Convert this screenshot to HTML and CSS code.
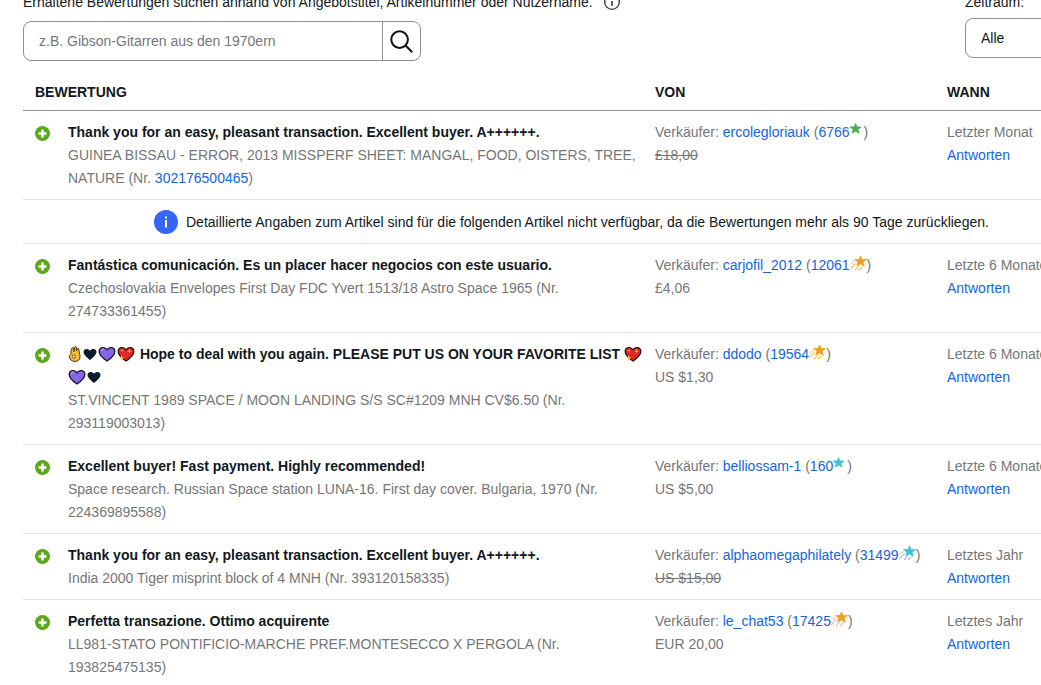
FILE: index.html
```html
<!DOCTYPE html>
<html lang="de">
<head>
<meta charset="utf-8">
<title>Bewertungen</title>
<link rel="stylesheet" href="styles.css">
</head>
<body>
<svg class="defs" aria-hidden="true">
  <symbol id="plus" viewBox="0 0 16 16"><circle cx="8" cy="8" r="8" fill="#5ba71b"/><path d="M8 3.800v8.400M3.800 8h8.400" stroke="#fff" stroke-width="2.600"/></symbol>
  <symbol id="star" viewBox="0 0 15 16"><path d="M6 1l1.500 3.700H12L8.600 7.500l1.200 4L6 9.300l-3.800 2.200 1.200-4L0 4.700h4.500z" fill="currentColor" stroke="currentColor" stroke-width=".7"/></symbol>
  <symbol id="shooting" viewBox="0 0 17 16"><path d="M10.500.8L12 4.500h4.400l-3.300 2.800 1.200 4-3.800-2.200-3.800 2.200 1.200-4-3.300-2.800H9z" fill="currentColor" stroke="currentColor" stroke-width=".7"/><path d="M5.500 8.500L.5 13.500M8.500 11.500l-3.500 3.500M12.500 11.500L9 15M4.500 6L1.500 9" stroke="currentColor" stroke-width=".8" fill="none"/></symbol>
  <symbol id="black-heart" viewBox="0 0 14 16"><path d="M7 14C4.500 12 .5 9 .5 5.800.5 2.700 5 1.800 7 4.800c2-3 6.500-2.100 6.500 1C13.500 9 9.500 12 7 14z" fill="#0b1c2c"/></symbol>
  <symbol id="purple-heart" viewBox="0 0 18 16"><path d="M9 15C6 13 1.200 9.500 1.200 5.500c0-4.500 5.800-5.200 7.800-1.700 2-3.500 7.800-2.800 7.800 1.700C16.800 9.500 12 13 9 15z" fill="#8566e8" stroke="#15121f" stroke-width="1.300"/><path d="M3.500 5c.3-1.500 1.500-2 2.500-1.800" stroke="#b29cf7" stroke-width="1.200" fill="none"/></symbol>
  <symbol id="spark-heart" viewBox="0 0 18 16"><path d="M9 15C6 13 1.200 9.500 1.200 5.500c0-4.500 5.800-5.200 7.800-1.700 2-3.500 7.800-2.800 7.800 1.700C16.800 9.500 12 13 9 15z" fill="#e3262c" stroke="#25120f" stroke-width="1.300"/><path d="M12.500 3l.6 1.600 1.600.6-1.600.6-.6 1.600-.6-1.600-1.600-.6 1.600-.6zM4.500 9l.8 2.200 2.200.8-2.200.8-.8 2.200-.8-2.200L1.500 12l2.200-.8zM5 3l.4 1.100 1.100.4-1.100.4L5 6l-.4-1.100-1.100-.4 1.100-.4z" fill="#ffc83d"/></symbol>
  <symbol id="ok-hand" viewBox="0 0 14 16"><path d="M3.200 7.800C2.600 5.500 3 3.200 4.300 1.900c.8-.8 1.800-.2 1.500.8C5.500 3.600 5.600 4.600 6 5.600L6.600 1.500C6.800.3 8.400.3 8.500 1.500l.1 3.300.7-1.900c.4-1 1.800-.6 1.700.5-.2 2.500 1 4.600 1 7.400 0 3-2 4.600-5 4.600-3.300 0-5.600-2-5.600-4.700 0-1.300.7-2.400 1.800-2.900z" fill="#f7bd36" stroke="#332312" stroke-width=".9"/><circle cx="5.800" cy="10.500" r="1.600" fill="#fff3d0" stroke="#6b4513" stroke-width=".9"/></symbol>
</svg>
<main class="page">
  <form class="filters">
    <div class="field">
      <label class="label" for="q">Erhaltene Bewertungen suchen anhand von Angebotstitel, Artikelnummer oder Nutzername.
        <svg class="hint" viewBox="0 0 16 16" fill="none" stroke="#333"><circle cx="8" cy="8" r="7.300" stroke-width="1.300"/><path d="M8 7v5M8 4v1.500" stroke-width="1.500"/></svg></label>
      <div class="search">
        <input id="q" class="search-input" type="text" placeholder="z.B. Gibson-Gitarren aus den 1970ern">
        <button class="search-button" type="button" aria-label="Suchen"><svg class="lens" viewBox="0 0 24 24" fill="none" stroke="#111" stroke-width="2.100"><circle cx="10" cy="10" r="8.700"/><path d="M16 16l7.200 7.200"/></svg></button>
      </div>
    </div>
    <div class="field period">
      <label class="label" for="period">Zeitraum:</label>
      <select id="period" class="select"><option>Alle</option></select>
    </div>
  </form>
  <table class="feedback">
    <colgroup><col class="col-icon"><col class="col-text"><col class="col-from"><col class="col-when"></colgroup>
    <thead><tr><th colspan="2">BEWERTUNG</th><th>VON</th><th>WANN</th></tr></thead>
    <tbody>
      <tr>
        <td><svg class="plus"><use href="#plus"/></svg></td>
        <td><strong>Thank you for an easy, pleasant transaction. Excellent buyer. A++++++.</strong><p>GUINEA BISSAU - ERROR, 2013 MISSPERF SHEET: MANGAL, FOOD, OISTERS, TREE, NATURE (Nr. <a href="#">302176500465</a>)</p></td>
        <td><p>Verkäufer: <a href="#">ercolegloriauk</a> (<a href="#">6766</a><svg class="star plain green"><use href="#star"/></svg>)</p><p><s>£18,00</s></p></td>
        <td><p>Letzter Monat</p><a href="#">Antworten</a></td>
      </tr>
      <tr>
        <td class="notice" colspan="4"><div class="notice-row"><svg class="info" viewBox="0 0 24 24"><circle cx="12" cy="12" r="12" fill="#3665f3"/><path d="M12 10v7.500M12 6.500v2" stroke="#fff" stroke-width="2"/></svg>Detaillierte Angaben zum Artikel sind für die folgenden Artikel nicht verfügbar, da die Bewertungen mehr als 90 Tage zurückliegen.</div></td>
      </tr>
      <tr>
        <td><svg class="plus"><use href="#plus"/></svg></td>
        <td><strong>Fantástica comunicación. Es un placer hacer negocios con este usuario.</strong><p>Czechoslovakia Envelopes First Day FDC Yvert 1513/18 Astro Space 1965 (Nr. 274733361455)</p></td>
        <td><p>Verkäufer: <a href="#">carjofil_2012</a> (<a href="#">12061</a><svg class="star orange"><use href="#shooting"/></svg>)</p><p>£4,06</p></td>
        <td><p>Letzte 6 Monate</p><a href="#">Antworten</a></td>
      </tr>
      <tr>
        <td><svg class="plus"><use href="#plus"/></svg></td>
        <td><strong><svg class="emoji small"><use href="#ok-hand"/></svg><svg class="emoji small"><use href="#black-heart"/></svg><svg class="emoji"><use href="#purple-heart"/></svg><svg class="emoji"><use href="#spark-heart"/></svg> Hope to deal with you again. PLEASE PUT US ON YOUR FAVORITE LIST <svg class="emoji"><use href="#spark-heart"/></svg><br><svg class="emoji"><use href="#purple-heart"/></svg><svg class="emoji small"><use href="#black-heart"/></svg></strong><p>ST.VINCENT 1989 SPACE / MOON LANDING S/S SC#1209 MNH CV$6.50 (Nr. 293119003013)</p></td>
        <td><p>Verkäufer: <a href="#">ddodo</a> (<a href="#">19564</a><svg class="star orange"><use href="#shooting"/></svg>)</p><p>US $1,30</p></td>
        <td><p>Letzte 6 Monate</p><a href="#">Antworten</a></td>
      </tr>
      <tr>
        <td><svg class="plus"><use href="#plus"/></svg></td>
        <td><strong>Excellent buyer! Fast payment. Highly recommended!</strong><p>Space research. Russian Space station LUNA-16. First day cover. Bulgaria, 1970 (Nr. 224369895588)</p></td>
        <td><p>Verkäufer: <a href="#">belliossam-1</a> (<a href="#">160</a><svg class="star plain turquoise"><use href="#star"/></svg>)</p><p>US $5,00</p></td>
        <td><p>Letzte 6 Monate</p><a href="#">Antworten</a></td>
      </tr>
      <tr>
        <td><svg class="plus"><use href="#plus"/></svg></td>
        <td><strong>Thank you for an easy, pleasant transaction. Excellent buyer. A++++++.</strong><p>India 2000 Tiger misprint block of 4 MNH (Nr. 393120158335)</p></td>
        <td><p>Verkäufer: <a href="#">alphaomegaphilately</a> (<a href="#">31499</a><svg class="star turquoise"><use href="#shooting"/></svg>)</p><p><s>US $15,00</s></p></td>
        <td><p>Letztes Jahr</p><a href="#">Antworten</a></td>
      </tr>
      <tr>
        <td><svg class="plus"><use href="#plus"/></svg></td>
        <td><strong>Perfetta transazione. Ottimo acquirente</strong><p>LL981-STATO PONTIFICIO-MARCHE PREF.MONTESECCO X PERGOLA (Nr. 193825475135)</p></td>
        <td><p>Verkäufer: <a href="#">le_chat53</a> (<a href="#">17425</a><svg class="star orange"><use href="#shooting"/></svg>)</p><p>EUR 20,00</p></td>
        <td><p>Letztes Jahr</p><a href="#">Antworten</a></td>
      </tr>
    </tbody>
  </table>
</main>
</body>
</html>
```

FILE: styles.css
```css
* { box-sizing: border-box; }
body {
  margin: 0;
  height: 100vh;
  overflow: hidden;
  background: #fff;
  color: #111820;
  font: 14px/23px "Liberation Sans", Arial, sans-serif;
}
p { margin: 0; }
.defs { position: absolute; width: 0; height: 0; }
.page {
  min-width: 1120px;
  margin-top: -9px;
  padding-left: 23px;
}
.filters {
  display: flex;
  justify-content: space-between;
}
.label { display: block; height: 30px; white-space: nowrap; }
.hint { width: 16px; height: 16px; margin-left: 7px; vertical-align: -3px; }
.search {
  display: flex;
  width: 398px;
  height: 40px;
  border: 1px solid #8f8f8f;
  border-radius: 8px;
  overflow: hidden;
}
.search-input {
  flex: 1;
  min-width: 0;
  padding: 0 15px;
  border: 0;
  background: none;
  font: inherit;
}
.search-input::placeholder { color: #767676; }
.search-button {
  display: grid;
  place-items: center;
  width: 38px;
  padding: 0;
  border: 0;
  border-left: 1px solid #8f8f8f;
  background: none;
}
.lens { width: 23px; height: 23px; }
.period { width: 155px; }
.period .label { height: 27px; }
.select {
  appearance: none;
  width: 100%;
  height: 40px;
  padding: 0 15px;
  border: 1px solid #8f8f8f;
  border-radius: 8px;
  background: #fff;
  color: inherit;
  font: inherit;
}
.feedback {
  width: 100%;
  margin-top: 12px;
  border-spacing: 0;
  table-layout: fixed;
}
.col-icon { width: 45px; }
.col-text { width: 587px; }
.col-from { width: 292px; }
th {
  height: 38px;
  padding: 2px 0 0;
  border-bottom: 1px solid #8f8f8f;
  text-align: left;
}
th:first-child { padding-left: 12px; }
td {
  padding: 10px 8px 9px 0;
  border-bottom: 1px solid #ddd;
  color: #767676;
  vertical-align: top;
}
td:first-child { padding-left: 12px; }
strong { color: #111820; }
a { color: #1565dc; text-decoration: none; }
.plus { display: block; width: 15px; height: 15px; margin-top: 5px; }
.star { width: 17px; height: 16px; vertical-align: -1px; }
.star.plain { width: 14px; }
.green { color: #4caa50; }
.orange { color: #ee9f22; }
.turquoise { color: #45bdd2; }
.emoji { width: 18px; height: 16px; margin-right: 1px; vertical-align: -3px; }
.emoji.small { width: 14px; }
td.notice { padding: 10px 0 9px; }
.notice-row {
  display: flex;
  align-items: center;
  gap: 8px;
  padding-left: 131px;
  height: 24px;
  color: #111820;
}
.info { width: 24px; height: 24px; }
```
